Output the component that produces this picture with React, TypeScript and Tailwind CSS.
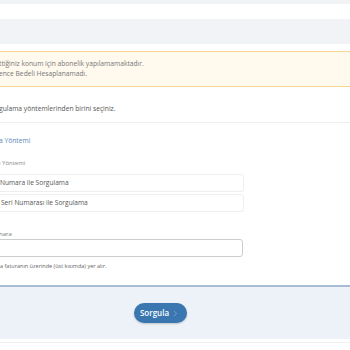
import React from 'react';
import { ChevronRight } from 'lucide-react';

export default function App() {
  return (
    <div className="w-[350px] h-[350px] overflow-hidden bg-white text-[#555] font-['Open_Sans',sans-serif]">
      <div className="h-[4px] bg-[#f2f3f5]" />
      <div className="h-[15px] bg-white" />
      <div className="h-[25px] bg-[#f2f3f6]" />
      <div className="h-[7px]" />

      {/* Warning */}
      <div className="h-[36px] bg-[#fff9ee] border-y border-[#f3d58e] flex flex-col justify-center text-[6.7px] leading-[10px] text-[#777]">
        <p className="ml-[-1px]">ttiğiniz konum için abonelik yapılamamaktadır.</p>
        <p className="ml-[-1px]">ence Bedeli Hesaplanamadı.</p>
      </div>

      <div className="pt-[17px] pb-[4px] text-[6.7px] leading-[10px] text-[#555]">
        <p className="ml-[-1px]">gulama yöntemlerinden birini seçiniz.</p>
      </div>
      <div className="mt-[4px] h-px bg-[#eeeeee]" />

      <p className="mt-[13px] text-[6.7px] leading-[10px] text-[#5a88bb] ml-[-1px]">a Yöntemi</p>

      <p className="mt-[13px] text-[6px] leading-[9px] text-[#888] ml-[-1px]">ı Yöntemi</p>

      <div className="mt-[6px] flex flex-col gap-[2px] w-[244px]">
        <div className="h-[18px] border border-[#eeeeee] rounded-[3px] ml-[-4px] pl-[3px] flex items-center text-[6.6px] text-[#555]">
          Numara ile Sorgulama
        </div>
        <div className="h-[18px] border border-[#eeeeee] rounded-[3px] ml-[-4px] pl-[4px] flex items-center text-[6.6px] text-[#555]">
          Seri Numarası ile Sorgulama
        </div>
      </div>

      <p className="mt-[18px] text-[6px] leading-[9px] text-[#777] ml-[-1px]">nara</p>
      <div className="h-[18px] w-[247px] ml-[-4px] border border-[#cccccc] rounded-[3px] bg-white" />
      <p className="mt-[5px] text-[5.5px] leading-[8px] text-[#666]">a faturanın üzerinde (üst kısımda) yer alır.</p>

      <div className="mt-[15px] h-[2px] bg-[#a8bdd3]" />
      <div className="h-[52px] bg-[#edf2f8] flex items-center justify-center">
        <button className="mr-[30px] h-[20px] w-[53px] rounded-full bg-[#3a76b0] shadow-[0_1px_2px_rgba(0,0,0,0.2)] flex items-center justify-center gap-[2px] text-[8px] font-semibold text-white">
          Sorgula
          <ChevronRight size={9} strokeWidth={1.5} className="text-[#9dbde0]" />
        </button>
      </div>
      <div className="h-[3px]" />
      <div className="h-px bg-[#f0f0f0]" />
    </div>
  );
}
